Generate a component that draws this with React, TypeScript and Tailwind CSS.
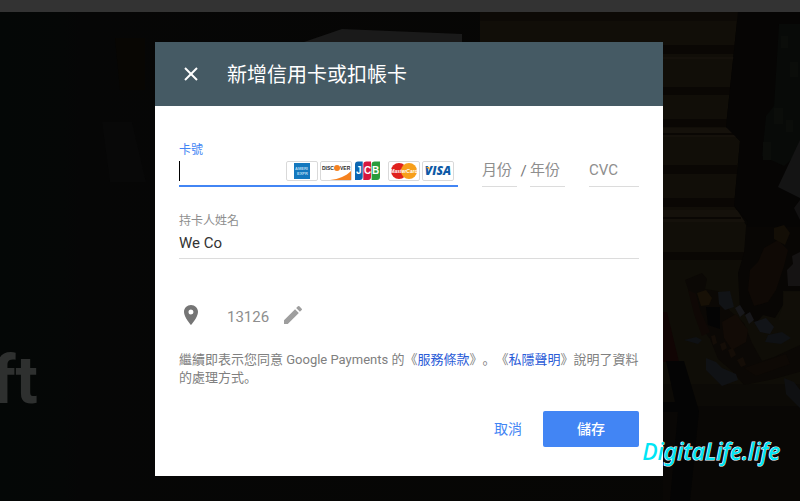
import React, { useState } from 'react';
import { X } from 'lucide-react';

const FONT = "font-['Roboto','Noto_Sans_CJK_TC',sans-serif]";

/** Dimmed game artwork that fills the page behind the dialog */
const Artwork: React.FC = () => (
  <svg
    className="absolute inset-0 w-full h-full"
    viewBox="0 0 800 501"
    preserveAspectRatio="xMidYMid slice"
    aria-hidden="true"
  >
    <defs>
      <linearGradient id="shade" x1="0" x2="1">
        <stop offset="0" stopColor="#040706" />
        <stop offset="0.08" stopColor="#050706" />
        <stop offset="0.1" stopColor="#060606" />
        <stop offset="1" stopColor="#070604" />
      </linearGradient>
    </defs>
    <rect width="800" height="501" fill="url(#shade)" />
    <path d="M102 122h30l14 60h-36z" fill="#080808" />
    <path d="M115 38h30v52h-25z" fill="#080603" />
    <path d="M304 42l38-13 120 5v8z" fill="#1a1a1a" />

    {/* Planks */}
    <path d="M480 12h258l-12 115 14 14-6 65 14 22-6 55H663V42H480z" fill="#110e08" />
    <path d="M480 12h258v9H480z" fill="#0d0a06" />
    <path d="M663 45h73v9h-73zM663 87h68v8h-68zM663 119h64v8h-64zM663 165h74v9h-74zM663 198h72v9h-72zM663 252h83v8h-83z" fill="#0a0704" />
    <path d="M663 57h72v2h-72zM663 128h66l8 9h-74zM663 210h74l8 12h-82z" fill="#15110b" />
    <path d="M663 133h72v2h-72zM663 217h78v2h-78z" fill="#0a0704" />
    <path d="M663 260h137v124H663z" fill="#0f0d07" />
    <path d="M663 384h137v22H663z" fill="#0c0a06" />
    <path d="M663 406h137v95H663z" fill="#090705" />
    <path d="M663 312h4l12 50h-16z" fill="#110504" />
    <path d="M666 361h18l15 50-9 90h-20l8-89h-15v-10h12z" fill="#040404" />

    {/* Wall and foliage */}
    <path d="M738 12h62v215h-54l2-5-14-16 6-65-14-14z" fill="#060504" />
    <path d="M779 24h21v128l-16 14-22-10 4-40 8-10z" fill="#080a08" />
    <path d="M781 36h7v12h-7zM790 62h8v15h-8zM774 108h9v16h-9zM763 142h8v18h-8zM786 120h7v12h-7z" fill="#0b0d0a" />
    <path d="M800 140v58l-22-11z" fill="#141414" />
    <path d="M794 208l6-8v20z" fill="#121111" />

    {/* Pixelated tools */}
    <path d="M746 227h54v64h-17v14l-8 13-12-3-7 8-16-12-2-38 6-20z" fill="#080604" />
    <path d="M750 270l8-8 6-14 14-8 10 10-4 16-8 24-8 12-14 4-6-16z" fill="#0f0905" />
    <path d="M784 292h16v28h-22l5-15z" fill="#110e08" />
    <path d="M774 228l10-3 6 8-5 12-11-6z" fill="#130e06" />
    <path d="M787 270l6-6-1-8 8-4v34h-12z" fill="#151313" />
    <path d="M685 280l17-7 5 6-2 10 13 2 12 20 14 12 8 20 10 18 12-4 26-12 14 6-4 18-36 10-30 6-12-14-14-12-8-20-12-16-4-16z" fill="#0b0805" />
    <path d="M706 307h14v22l-12-4z" fill="#040404" />
    <path d="M697 293l9-3 6 8-3 7-8 1z" fill="#171006" />
    <path d="M688 290l8 4 4 16 10 22-8 4-8-22z" fill="#0f0805" />
    <path d="M722 322l14-8 12 16-2 12-14 8-8-12z" fill="#120b06" />
    <path d="M718 292l12-1 4 16-9 3-6-6z" fill="#111316" />
    <path d="M735 308l5-3 5 8-5 4zM745 315l5-3 4 8-5 4z" fill="#17171a" />
    <path d="M754 322l12-4 8 9-4 7-10-2z" fill="#121418" />
    <path d="M768 335l14-3 9 6-10 6-16-2zM684 340l12-3 6 3-4 4z" fill="#0f1114" />
    <path d="M728 350l5-2 3 7-5 3zM720 344l5-2 2 6-5 3zM737 360l6-3 3 8-5 2zM711 336l4-1 2 8-4 2z" fill="#140d07" />
    <path d="M706 358l10 4 6 6 14 6 2 6-16 6-10-10-6-6z" fill="#101215" />
    <path d="M744 368l42-14 4 10-34 12z" fill="#0e0905" />
    <path d="M784 378l10 4 6 8v18l-14-14z" fill="#0f1012" />
  </svg>
);

const CardFrame: React.FC<{ label: string; children: React.ReactNode }> = ({ label, children }) => (
  <svg width="32" height="20" viewBox="0 0 32 20" role="img" aria-label={label}>
    <rect x="0.5" y="0.5" width="31" height="19" rx="1.5" fill="#fff" stroke="#d9d9d9" />
    {children}
  </svg>
);

const CardLogos: React.FC = () => (
  <div className="flex items-center gap-0.5 pr-1">
    <CardFrame label="American Express">
      <rect x="8" y="2" width="16" height="16" fill="#1478be" />
      <g fill="#b5d8ef" fontFamily="Liberation Sans" fontWeight="700" fontSize="4">
        <text x="9" y="9">AMERI</text>
        <text x="11" y="14">EXPR</text>
      </g>
    </CardFrame>
    <CardFrame label="Discover">
      <path d="M31 10v9H10c9-1 16-4 21-9z" fill="#f58220" />
      <circle cx="17" cy="7" r="3" fill="#f58220" />
      <g fill="#2b2b2b" fontFamily="Liberation Sans" fontWeight="700" fontSize="5">
        <text x="2" y="9">DISC</text>
        <text x="20" y="9">VER</text>
      </g>
    </CardFrame>
    <svg width="32" height="20" viewBox="0 0 32 20" role="img" aria-label="JCB">
      <path d="M4 .5h4.700V16a3 3 0 0 1-3 3H1V3.500a3 3 0 0 1 3-3z" fill="#0b66b2" />
      <path d="M12.300 .5H17V16a3 3 0 0 1-3 3H9.300V3.500a3 3 0 0 1 3-3z" fill="#d6173e" />
      <path d="M20.600 .5H26V16a3 3 0 0 1-3 3h-5.400V3.500a3 3 0 0 1 3-3z" fill="#2a9c3c" />
      <g fill="#fff" fontFamily="Liberation Sans" fontWeight="700" fontSize="10">
        <text x="2" y="13">J</text>
        <text x="10" y="13">C</text>
        <text x="18" y="13">B</text>
      </g>
    </svg>
    <CardFrame label="MasterCard">
      <circle cx="11" cy="10" r="8" fill="#e0211d" />
      <circle cx="21" cy="10" r="8" fill="#f79f1a" />
      <text x="16" y="12" textAnchor="middle" fill="#fff" fontFamily="Liberation Sans" fontStyle="italic" fontWeight="700" fontSize="5">
        MasterCard
      </text>
    </CardFrame>
    <CardFrame label="Visa">
      <text x="16" y="14" textAnchor="middle" fill="#0f5aa6" fontFamily="Open Sans" fontStyle="italic" fontWeight="800" fontSize="12">
        VISA
      </text>
      <path d="M4 6h3l1 3z" fill="#f2a227" />
    </CardFrame>
  </div>
);

/** Full stop that sits in the lower left of its cell */
const Stop: React.FC = () => (
  <span lang="zh-CN" className="font-['Noto_Sans_CJK_SC',sans-serif] leading-none">。</span>
);

const SMALL_FIELD =
  'h-8 min-w-0 border-b border-[#dcdcdc] bg-transparent pb-0.5 text-[15px] text-[#424242] placeholder:text-[#8e8e8e] outline-none';

export default function App() {
  const [cardNumber, setCardNumber] = useState('');
  const [holder, setHolder] = useState('We Co');

  return (
    <div className={`relative min-h-screen overflow-hidden bg-[#050505] ${FONT}`} lang="zh-TW">
      <Artwork />
      <div className="absolute inset-x-0 top-0 h-3 bg-[#333333]" />
      <div className="absolute -left-2 top-[345px] text-[66px] leading-[72px] font-bold text-[#2e302f]">ft</div>

      <div className="relative flex justify-center pt-[42px] pb-6 pl-[18px]">
        <form
          role="dialog"
          aria-labelledby="dialog-title"
          className="w-full max-w-[508px] bg-white"
          onSubmit={(e) => e.preventDefault()}
        >
          <header className="flex h-16 items-center gap-6 bg-[#455a64] px-6 text-white">
            <button type="button" aria-label="關閉" className="flex size-6 items-center justify-center">
              <X className="size-6" strokeWidth={2} strokeLinecap="butt" />
            </button>
            <h1 id="dialog-title" className="pt-0.5 text-xl">新增信用卡或扣帳卡</h1>
          </header>

          <div className="px-6 pt-[34px] pb-[29px]">
            {/* Card number, expiry and CVC */}
            <div className="flex items-end gap-6">
              <div className="min-w-0 flex-1">
                <label htmlFor="card-number" className="block text-xs leading-5 text-[#4285f4]">卡號</label>
                <div className="flex h-[27px] items-center border-b-2 border-[#4285f4] pb-1">
                  {cardNumber === '' && <span className="h-5 w-px bg-black" />}
                  <input
                    id="card-number"
                    type="text"
                    inputMode="numeric"
                    className="h-5 min-w-0 flex-1 bg-transparent text-[15px] outline-none"
                    value={cardNumber}
                    onChange={(e) => setCardNumber(e.target.value)}
                  />
                  <CardLogos />
                </div>
              </div>
              <div className="flex items-center">
                <input type="text" aria-label="月份" placeholder="月份" className={`${SMALL_FIELD} w-[35px]`} />
                <span className="w-[13px] text-center text-[15px] text-[#757575]">/</span>
                <input type="text" aria-label="年份" placeholder="年份" className={`${SMALL_FIELD} w-[35px]`} />
              </div>
              <input type="text" aria-label="CVC" placeholder="CVC" className={`${SMALL_FIELD} w-[50px]`} />
            </div>

            {/* Card holder */}
            <div className="mt-6">
              <label htmlFor="holder" className="block text-xs leading-5 text-[#8e8e8e]">持卡人姓名</label>
              <input
                id="holder"
                type="text"
                className="block h-7 w-full border-b border-[#dcdcdc] bg-transparent pb-1 text-[15px] text-[#333333] outline-none"
                value={holder}
                onChange={(e) => setHolder(e.target.value)}
              />
            </div>

            {/* Billing address */}
            <div className="mt-11 flex items-center">
              <svg className="size-6" viewBox="0 0 24 24" fill="#757575" aria-hidden="true">
                <path d="M12 2C8.130 2 5 5.130 5 9c0 5.250 7 13 7 13s7-7.750 7-13c0-3.870-3.130-7-7-7zm0 9.500a2.500 2.500 0 1 1 0-5 2.500 2.500 0 0 1 0 5z" />
              </svg>
              <span className="ml-6 pt-1 text-[15px] leading-5 text-[#8e8e8e]">13126</span>
              <button type="button" aria-label="編輯" className="ml-3">
                <svg className="size-6" viewBox="0 0 24 24" fill="#9e9e9e" aria-hidden="true">
                  <path d="M3 17.250V21h3.750L17.810 9.940l-3.750-3.750L3 17.250zM20.710 7.040a1 1 0 0 0 0-1.410l-2.340-2.340a1 1 0 0 0-1.410 0l-1.830 1.830 3.750 3.750 1.830-1.830z" />
                </svg>
              </button>
            </div>

            <p className="mt-6 text-[13px] leading-[18px] text-[#808080] [text-spacing-trim:space-all]">
              繼續即表示您同意 Google Payments 的《<a href="#terms" className="text-[#2a5bd7]">服務條款</a>》<Stop />《<a href="#privacy" className="text-[#2a5bd7]">私隱聲明</a>》說明了資料的處理方式<Stop />
            </p>

            <div className="mt-6 flex justify-end gap-2">
              <button type="button" className="h-9 px-[13px] text-sm text-[#4285f4]">取消</button>
              <button type="submit" className="h-9 w-24 rounded-xs bg-[#4285f4] text-sm font-medium text-white">儲存</button>
            </div>
          </div>
        </form>
      </div>

      <div className="absolute right-5 bottom-[35px] font-['Noto_Sans',sans-serif] text-[23px] leading-[30px] font-medium italic text-[#00e5f5] [paint-order:stroke_fill] [-webkit-text-stroke:1px_white]">
        DigitaLife.life
      </div>
    </div>
  );
}
